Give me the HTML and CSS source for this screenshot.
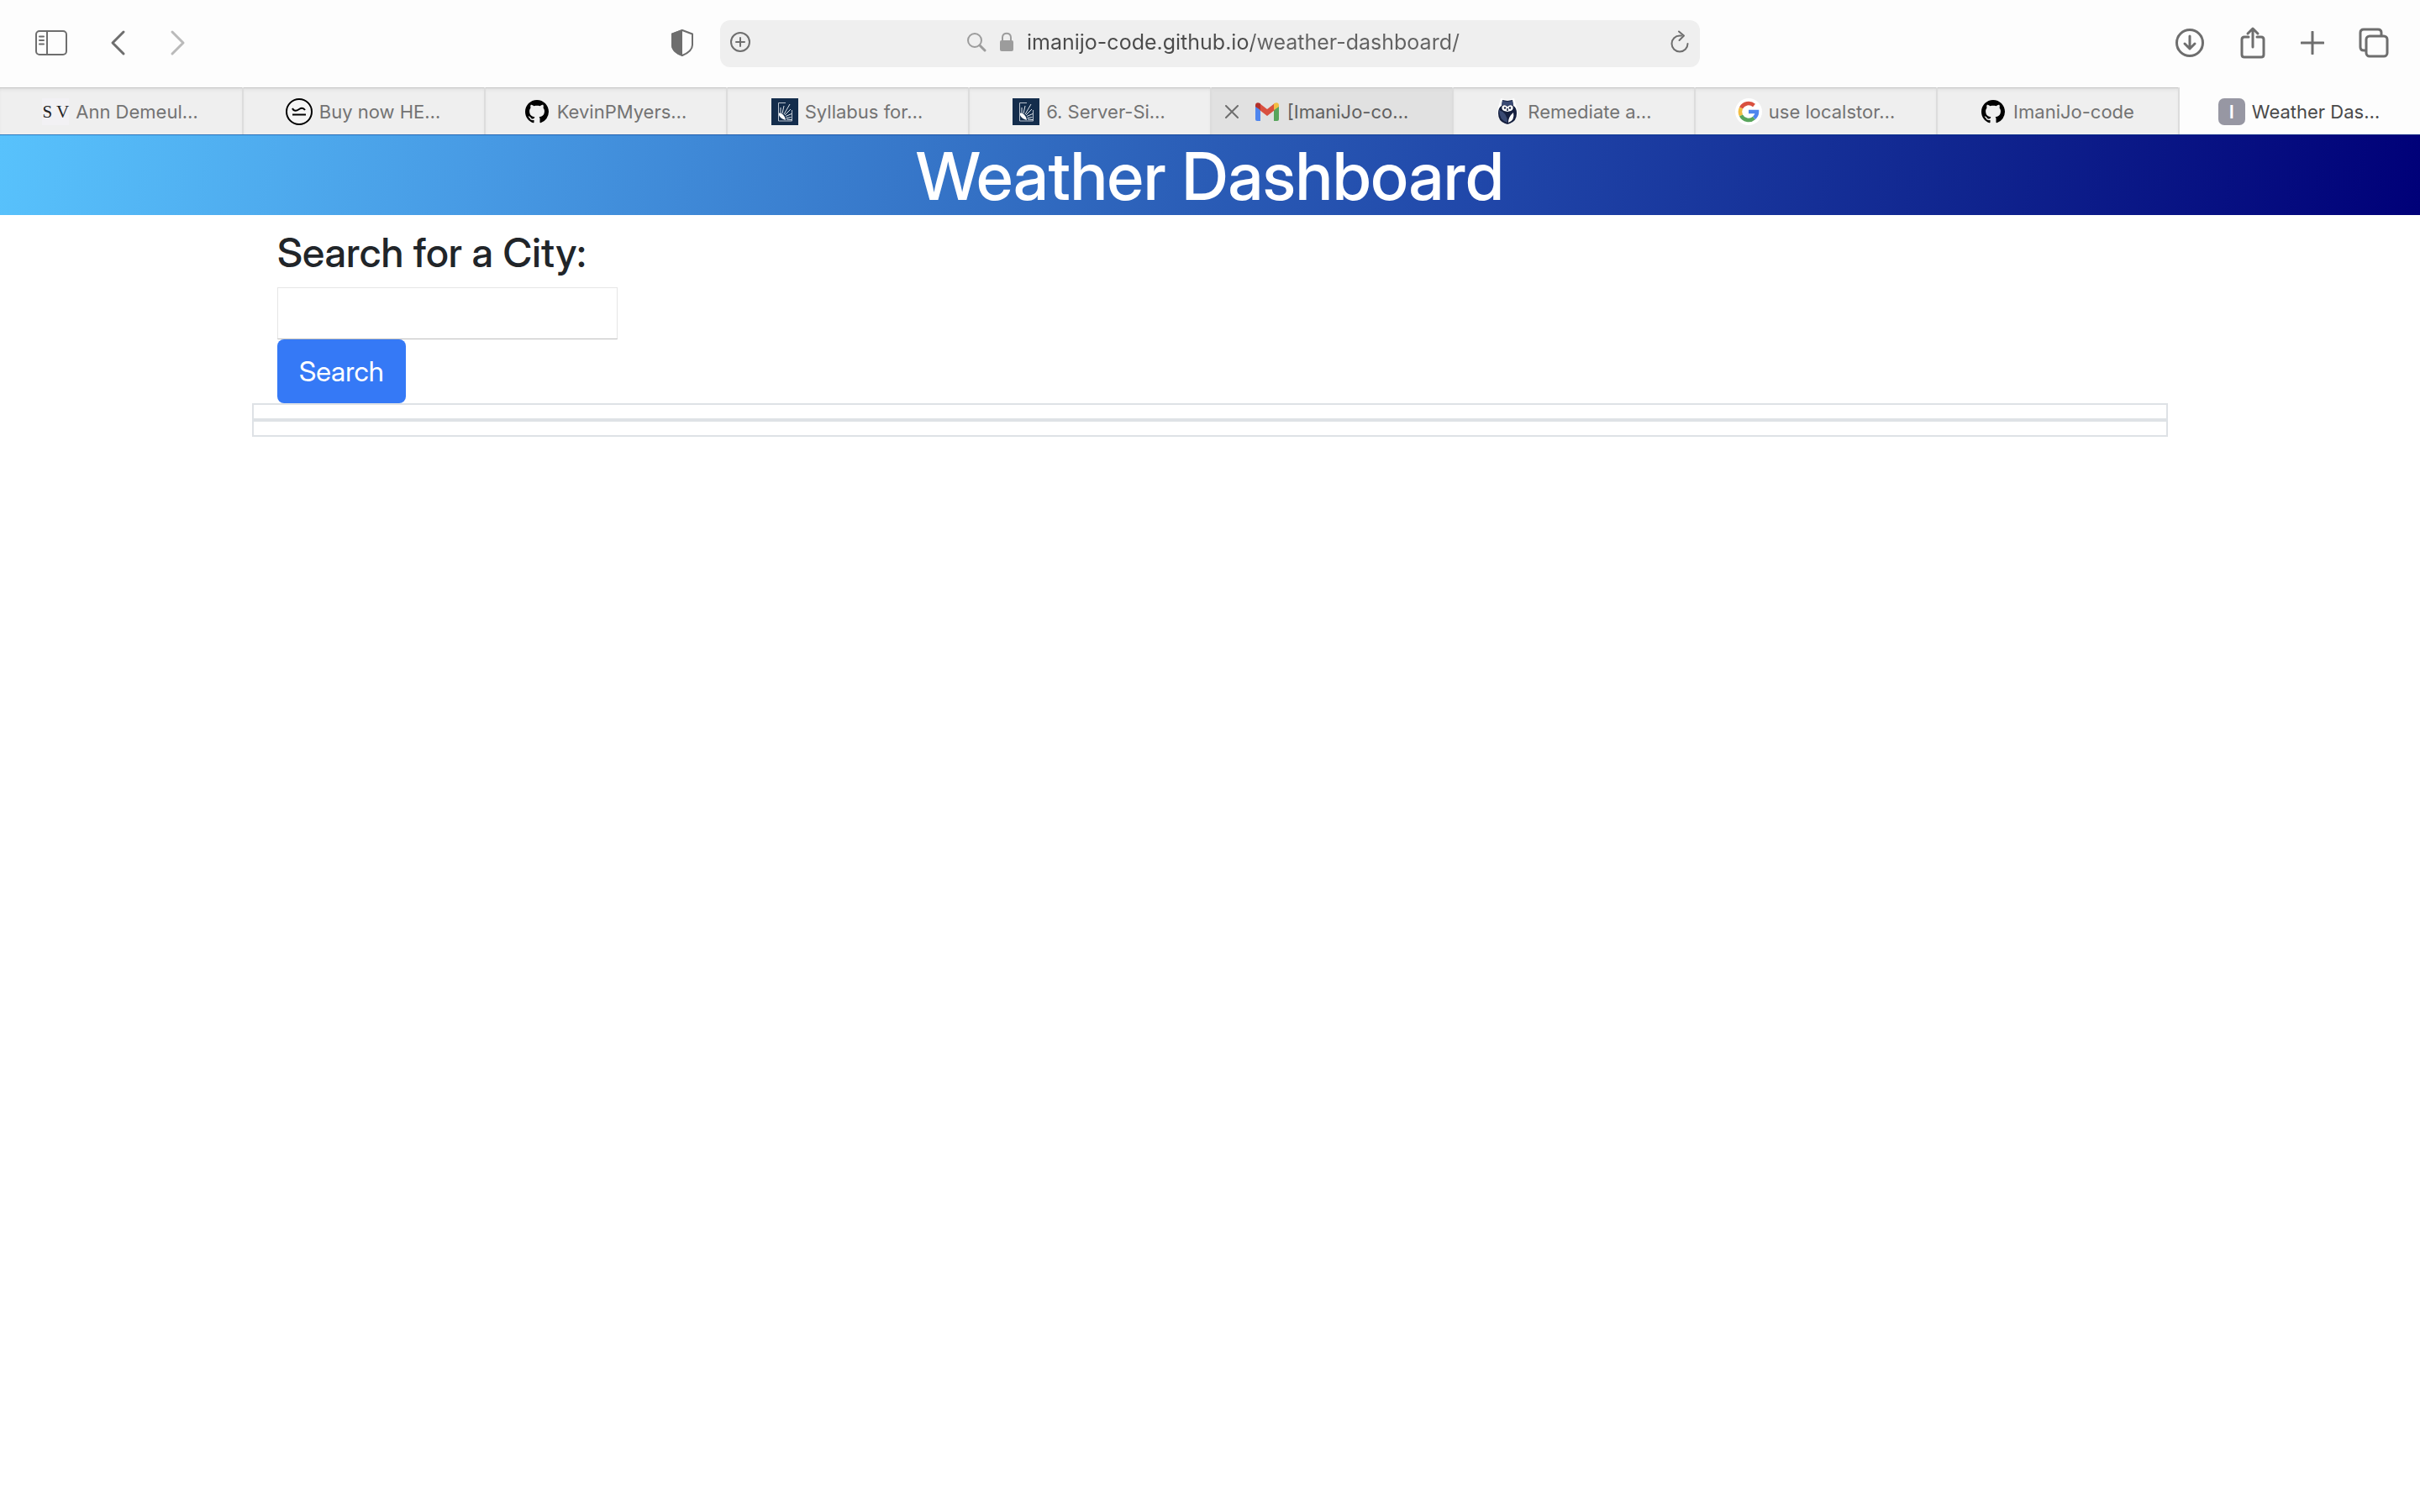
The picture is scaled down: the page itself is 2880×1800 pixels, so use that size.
FILE: index.html
```html
<!DOCTYPE html>
<html lang="en">
<head>
<meta charset="utf-8">
<meta name="viewport" content="width=device-width, initial-scale=1">
<title>Weather Dashboard</title>
<link rel="stylesheet" href="styles.css">
</head>
<body>
<svg class="defs" aria-hidden="true">
  <symbol id="github" viewBox="0 0 16 16"><path d="M8 0C3.58 0 0 3.58 0 8c0 3.54 2.29 6.53 5.47 7.59.4.07.55-.17.55-.38 0-.19-.01-.82-.01-1.49-2.01.37-2.53-.49-2.69-.94-.09-.23-.48-.94-.82-1.13-.28-.15-.68-.52-.01-.53.63-.01 1.08.58 1.23.82.72 1.21 1.87.87 2.33.66.07-.52.28-.87.51-1.07-1.78-.2-3.64-.89-3.64-3.95 0-.87.31-1.59.82-2.15-.08-.2-.36-1.02.08-2.12 0 0 .67-.21 2.2.82.64-.18 1.32-.27 2-.27s1.36.09 2 .27c1.53-1.04 2.2-.82 2.2-.82.44 1.1.16 1.92.08 2.12.51.56.82 1.27.82 2.15 0 3.07-1.87 3.75-3.65 3.95.29.25.54.73.54 1.48 0 1.07-.01 1.93-.01 2.2 0 .21.15.46.55.38A8.01 8.01 0 0 0 16 8c0-4.42-3.58-8-8-8z"/></symbol>
  <symbol id="sunburst" viewBox="0 0 32 32">
    <path fill="#142d4c" d="M0 0h32v32H0z"/>
    <path fill="none" stroke="#b9c3cf" stroke-width="1" d="M17 5.500H8.500V27H24.500V14"/>
    <path fill="#fff" d="M9 17.500c4 0 7 3 8 8.500-4-1-7-3-8-6z"/>
    <path fill="none" stroke="#dfe5eb" stroke-width="1" d="M11 18l0-7M13 18l2-9M15 19l7-12M16 20l7-7M17 21.500l7-3M17.500 23.500l6-1M18 25l6 .5"/>
  </symbol>
</svg>

<header class="browser">
  <div class="toolbar">
    <div class="tools tools-left">
      <button class="tool sidebar" aria-label="Show sidebar"><svg width="40" height="32" viewBox="0 0 40 32"><rect x="2" y="2" width="36" height="28" rx="4"/><path d="M15 2v28"/><path class="thin" d="M6 8.500h5M6 13h5M6 17.500h5"/></svg></button>
      <button class="tool back" aria-label="Back"><svg width="20" height="32" viewBox="0 0 20 32"><path d="M16 3L3 16l13 13"/></svg></button>
      <button class="tool forward" aria-label="Forward" disabled><svg width="20" height="32" viewBox="0 0 20 32"><path d="M4 3l13 13L4 29"/></svg></button>
      <button class="tool shield" aria-label="Privacy report"><svg width="28" height="34" viewBox="0 0 28 34"><path d="M14 2l12 4.500v13c0 6-6 10-12 12.500C8 29.500 2 25.500 2 19.500v-13z"/><path class="solid" d="M14 1L1 6v14c0 6 6 11 13 13z"/></svg></button>
    </div>
    <div class="address">
      <button class="tool" aria-label="Add page"><svg width="24" height="24" viewBox="0 0 24 24"><circle class="thin" cx="12" cy="12" r="11"/><path class="thin" d="M12 7v10M7 12h10"/></svg></button>
      <label class="location">
        <svg class="muted" width="24" height="24" viewBox="0 0 24 24" aria-hidden="true"><circle class="thin" cx="10" cy="10" r="8"/><path d="M16 16l6 6"/></svg>
        <svg class="muted" width="18" height="24" viewBox="0 0 18 24" aria-hidden="true"><path class="thin" d="M4 11V6.500c0-6.500 10-6.500 10 0V11"/><rect class="solid" x="1" y="10" width="16" height="13" rx="2"/></svg>
        <input class="url" type="text" aria-label="Address" value="imanijo-code.github.io/weather-dashboard/">
      </label>
      <button class="tool" aria-label="Reload"><svg width="24" height="28" viewBox="0 0 24 28"><path class="thin" d="M14 6.500H12A9.500 9.500 0 1 0 21.500 16"/><path class="thin" d="M11 1.500l6 5-5.500 5.500"/></svg></button>
    </div>
    <div class="tools tools-right">
      <button class="tool" aria-label="Downloads"><svg width="36" height="36" viewBox="0 0 36 36"><circle cx="18" cy="18" r="15.500"/><path d="M18 10v15M12 19l6 6 6-6"/></svg></button>
      <button class="tool" aria-label="Share"><svg width="32" height="40" viewBox="0 0 32 40"><path d="M11 13H6q-3 0-3 3v18q0 3 3 3h20q3 0 3-3V16q0-3-3-3h-5M16 25V3M10 9l6-6 6 6"/></svg></button>
      <button class="tool" aria-label="New tab"><svg width="28" height="28" viewBox="0 0 28 28"><path d="M14 1v26M1 14h26"/></svg></button>
      <button class="tool" aria-label="Tab overview"><svg width="36" height="36" viewBox="0 0 36 36"><path d="M8 27H6q-4 0-4-4V6q0-4 4-4h17q4 0 4 4v3"/><rect x="9" y="10" width="25" height="24" rx="4"/></svg></button>
    </div>
  </div>

  <nav class="tabs" aria-label="Open tabs">
    <a class="tab" href="#"><span class="favicon favicon-sv">S V</span>Ann Demeul…</a>
    <a class="tab" href="#"><svg class="favicon" viewBox="0 0 32 32"><circle cx="16" cy="16" r="15" fill="#fff" fill-opacity=".4" stroke="#000" stroke-width="2"/><path d="M8 12c2 4 5 3 8 1s5-2 7 1M8 19.500h16" fill="none" stroke="#000" stroke-width="2"/></svg>Buy now HE…</a>
    <a class="tab" href="#"><svg class="favicon favicon-github"><use href="#github"/></svg>KevinPMyers…</a>
    <a class="tab" href="#"><svg class="favicon"><use href="#sunburst"/></svg>Syllabus for…</a>
    <a class="tab" href="#"><svg class="favicon"><use href="#sunburst"/></svg>6. Server-Si…</a>
    <div class="tab hovered"><button class="tool close" aria-label="Close tab"><svg width="16" height="16" viewBox="0 0 16 16"><path class="thin" d="M1 1l14 14M15 1L1 15"/></svg></button><svg class="favicon" viewBox="0 0 32 32"><path fill="#4f86ee" d="M2 9l6 5v13H4q-2 0-2-2z"/><path fill="#58a55c" d="M24 14l6-5v16q0 2-2 2h-4z"/><path fill="#d9503f" d="M7 6l9 7 9-7v8l-9 7-9-7z"/><path fill="#b3302a" d="M2 8.500C2 5 5 4.500 7.500 6L8 6.500V14l-6-4z"/><path fill="#f2bd42" d="M30 8.500C30 5 27 4.500 24.500 6l-.5.500V14l6-4z"/></svg><a href="#">[ImaniJo-co…</a></div>
    <a class="tab" href="#"><svg class="favicon" viewBox="0 0 32 32"><path fill="#fff" d="M8 0l8 2 8-2 3 11q4 14-11 21Q1 25 5 11z"/><path fill="#16203f" d="M10 2l6 1 6-1 1 7q4 2 4 9 0 9-8 12l-3 1-3-1q-8-3-8-12 0-7 4-9z"/><path fill="#3a4a73" d="M10 3l6 1 6-1 1 5-7 1-7-1zM6 14q10 3 10 15Q6 26 6 14z"/><path fill="#fff" d="M10 9q3-2 6 1 3-3 6-1 2 4-2 6l-4 1-4-1q-4-2-2-6zM17 29q0-7 6-12 2 9-6 12z"/><circle cx="13" cy="11.500" r="1.200" fill="#16203f"/><circle cx="19" cy="11.500" r="1.200" fill="#16203f"/><path stroke="#16203f" stroke-width="1.500" d="M16 12v3"/></svg>Remediate a…</a>
    <a class="tab" href="#"><svg class="favicon" viewBox="0 0 32 32"><circle cx="16" cy="16" r="16" fill="#fff"/><g fill="none" stroke-width="4.500"><path stroke="#d9503f" d="M22.500 8.500A10 10 0 0 0 7 11.500"/><path stroke="#f2bd42" d="M7 11.500A10 10 0 0 0 7 20.500"/><path stroke="#58a55c" d="M7 20.500A10 10 0 0 0 22.500 23.500"/><path stroke="#4f86ee" d="M22.500 23.500Q26 20.500 26 16H16"/></g></svg>use localstor…</a>
    <a class="tab" href="#"><svg class="favicon favicon-github"><use href="#github"/></svg>ImaniJo-code</a>
    <a class="tab active" href="#" aria-current="page"><span class="favicon favicon-letter">I</span>Weather Das…</a>
  </nav>
</header>

<div class="banner"><h1>Weather Dashboard</h1></div>

<main class="container">
  <form class="search">
    <label class="search-title" for="city">Search for a City:</label>
    <input class="city" id="city" type="text">
    <button class="search-button" type="button">Search</button>
  </form>
  <section class="panel" aria-label="Current weather"></section>
  <section class="panel" aria-label="Forecast"></section>
</main>
</body>
</html>
```
FILE: styles.css
```css
* { box-sizing: border-box; }

body {
  margin: 0;
  background: #fff;
  color: #212529;
  font-family: Inter, "Liberation Sans", sans-serif;
}

button, input { font-family: inherit; }
a { color: inherit; text-decoration: none; }
.defs { display: none; }

/* Browser toolbar */
.toolbar {
  display: grid;
  grid-template-columns: minmax(0, 857fr) minmax(0, 1166fr) minmax(0, 857fr);
  align-items: center;
  height: 104px;
  background: #fdfdfd;
}

.tools { display: flex; align-items: center; padding-bottom: 2px; }
.tools-left { padding-left: 41px; padding-right: 31px; }
.tools-right { justify-content: flex-end; gap: 41px; padding-right: 37px; }

.tool {
  display: flex;
  padding: 0;
  border: 0;
  background: none;
  color: #6e6e6e;
}

.tool svg, .muted {
  fill: none;
  stroke: currentColor;
  stroke-width: 3px;
  stroke-linecap: round;
  stroke-linejoin: round;
}

.sidebar svg, .shield svg { stroke-width: 2px; }
.tool .thin, .muted .thin { stroke-width: 2px; }
.tool .solid, .muted .solid { fill: currentColor; stroke: none; }
.muted { color: #9c9c9c; }
.back { margin-left: 50px; }
.forward { margin-left: 50px; color: #bababa; }
.shield { margin-left: auto; }

.address {
  display: flex;
  align-items: center;
  justify-content: space-between;
  height: 56px;
  padding: 0 12px 4px;
  border-radius: 12px;
  background: #efefef;
}

.location { display: flex; align-items: center; gap: 15px; padding-left: 14px; }

.url {
  width: 522px;
  padding: 0;
  border: 0;
  background: linear-gradient(90deg, #4b4b4b 268px, #626262 268px) text;
  color: transparent;
  font-size: 25px;
}

/* Tab strip */
.tabs {
  display: grid;
  grid-template-columns: repeat(10, minmax(0, 1fr));
  height: 56px;
}

.tab {
  position: relative;
  display: flex;
  align-items: center;
  justify-content: center;
  gap: 8px;
  padding-top: 2px;
  padding-right: 2px;
  border-left: 2px solid #dcdcdc;
  background: #efefef;
  box-shadow: inset 0 1px #c6c6c6, inset 0 4px 4px -2px #d8d8d8;
  color: #737373;
  font-size: 22px;
  white-space: nowrap;
}

.tab:first-child { border-left: 0; }
.hovered { background: #e1e1e1; color: #606060; }
.active { background: #fdfdfd; box-shadow: none; color: #4a4a4a; }
.close { position: absolute; left: 16px; }
.favicon { flex: none; width: 32px; height: 32px; }
.favicon-github { padding: 2px; }

.favicon-sv {
  background: #f2f1f4;
  color: #222;
  font: 21px/32px "Liberation Serif", serif;
  text-align: center;
}

.favicon-letter {
  border-radius: 7px;
  background: #9797a3;
  color: #fff;
  font-size: 22px;
  font-weight: 600;
  line-height: 32px;
  text-align: center;
}

/* Page */
.banner {
  background: linear-gradient(100deg, #58c2fc, #479ae4 20%, #3778ca 37%, #2a5cb6 50%, #1e42a6 64%, #10258f 81%, #000078);
  box-shadow: inset 0 1px rgba(0, 50, 130, 0.5);
  color: #fff;
  text-align: center;
}

h1, .search-title, .search-button {
  font-family: "Inter Display", Inter, "Liberation Sans", sans-serif;
}

h1 {
  margin: 0;
  padding-top: 2px;
  font-size: 79px;
  font-weight: 500;
  line-height: 94px;
}

.container {
  width: 100%;
  max-width: 2280px;
  margin: 0 auto;
}

.search {
  display: flex;
  flex-direction: column;
  align-items: flex-start;
  padding: 16px 30px 0;
}

.search-title {
  margin-bottom: 12px;
  font-size: 48px;
  font-weight: 500;
  line-height: 58px;
}

.city {
  width: 405px;
  height: 62px;
  padding: 0 8px;
  border: 1px solid #e6e6e6;
  border-bottom-color: #bdbdbd;
  background: #fff;
  font-size: 33px;
}

.search-button {
  height: 76px;
  padding: 0 26px;
  border: 0;
  border-radius: 8px;
  background: #3579f6;
  color: #fff;
  font-size: 33px;
}

.panel {
  padding: 8px;
  border: 2px solid #dee2e6;
}
```
